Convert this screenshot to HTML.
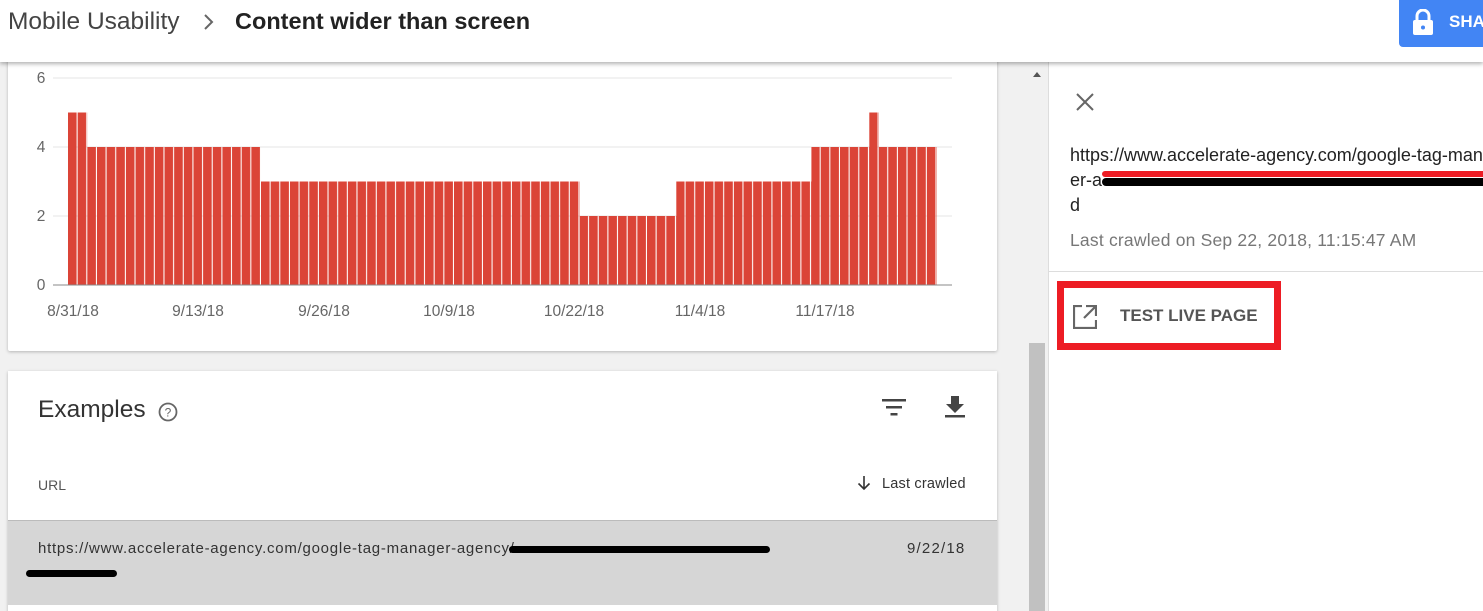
<!DOCTYPE html>
<html style="overflow:hidden;height:611px"><head><style>
body{margin:0;width:1483px;height:611px;overflow:hidden;background:#f1f1f1;font-family:"Liberation Sans",Arial,sans-serif;position:relative}
.a{position:absolute;white-space:nowrap}
</style></head><body>
<div class="a" style="left:0;top:62px;width:1048px;height:549px;background:#f1f1f1"></div>
<div class="a" style="left:8px;top:50px;width:989px;height:301px;background:#fff;box-shadow:0 1px 3px rgba(0,0,0,.25);border-radius:2px"></div>
<svg class="a" style="left:0;top:0" width="1000" height="330">
<defs><pattern id="p" patternUnits="userSpaceOnUse" x="68" y="0" width="9.65" height="400"><rect x="0" y="0" width="8.6" height="400" fill="#db4437"/></pattern></defs>
<g stroke="#e6e6e6"><line x1="53" y1="78" x2="952" y2="78"/><line x1="53" y1="147" x2="952" y2="147"/><line x1="53" y1="216" x2="952" y2="216"/></g>
<g fill="url(#p)">
<rect x="68" y="112.5" width="19.3" height="172.5"/>
<rect x="87.3" y="147" width="173.7" height="138"/>
<rect x="261" y="181.5" width="318.8" height="103.5"/>
<rect x="579.8" y="216" width="96.5" height="69"/>
<rect x="676.3" y="181.5" width="135.1" height="103.5"/>
<rect x="811.4" y="147" width="57.9" height="138"/>
<rect x="869.3" y="112.5" width="9.65" height="172.5"/>
<rect x="879" y="147" width="57.9" height="138"/>
</g>
<line x1="53" y1="285" x2="952" y2="285" stroke="#888"/>
<g font-size="15.5" fill="#666" text-anchor="middle" font-family="Liberation Sans,Arial,sans-serif">
<text x="41" y="83">6</text><text x="41" y="152">4</text><text x="41" y="221">2</text><text x="41" y="290">0</text>
<text x="73" y="316">8/31/18</text><text x="198" y="316">9/13/18</text><text x="324" y="316">9/26/18</text><text x="449" y="316">10/9/18</text><text x="574" y="316">10/22/18</text><text x="700" y="316">11/4/18</text><text x="825" y="316">11/17/18</text>
</g></svg>
<div class="a" style="left:8px;top:371px;width:989px;height:260px;background:#fff;box-shadow:0 1px 3px rgba(0,0,0,.25)"></div>
<div class="a" style="left:38px;top:396px;font-size:24.5px;color:#333">Examples</div>
<svg class="a" style="left:157px;top:401px" width="22" height="22"><circle cx="11" cy="11" r="8.5" fill="none" stroke="#666" stroke-width="1.8"/><text x="11" y="15.5" font-size="12" text-anchor="middle" fill="#666" font-family="Liberation Sans,Arial">?</text></svg>
<svg class="a" style="left:882px;top:398px" width="24" height="20"><g fill="#444"><rect x="0" y="1" width="24" height="2.5"/><rect x="4" y="8" width="16" height="2.5"/><rect x="8.5" y="15" width="7" height="2.5"/></g></svg>
<svg class="a" style="left:944px;top:396px" width="22" height="24"><path d="M7 0h8v8h5l-9 9-9-9h5z" fill="#444"/><rect x="1" y="19" width="20" height="2.5" fill="#444"/></svg>
<div class="a" style="left:38px;top:477px;font-size:14px;color:#555">URL</div>
<svg class="a" style="left:857px;top:475px" width="14" height="16"><path d="M7 1v13M1.5 8.5L7 14l5.5-5.5" fill="none" stroke="#333" stroke-width="1.6"/></svg>
<div class="a" style="left:882px;top:476px;font-size:14.5px;color:#333;letter-spacing:.2px">Last crawled</div>
<div class="a" style="left:8px;top:520px;width:989px;height:84px;background:#d6d6d6;border-top:1px solid #bbb"></div>
<div class="a" style="left:38px;top:540px;font-size:15px;color:#333;letter-spacing:.75px">https://www.accelerate-agency.com/google-tag-manager-agency/</div>
<div class="a" style="left:509px;top:546px;width:261px;height:7px;background:#000;border-radius:4px"></div>
<div class="a" style="left:26px;top:570px;width:91px;height:7px;background:#000;border-radius:4px"></div>
<div class="a" style="left:907px;top:540px;font-size:15px;color:#333;letter-spacing:1.2px">9/22/18</div>
<div class="a" style="left:1028px;top:62px;width:18px;height:549px;background:#f1f1f1"></div>
<div class="a" style="left:1029px;top:343px;width:16px;height:268px;background:#c1c1c1"></div>
<div class="a" style="left:1033px;top:72px;width:0;height:0;border:4px solid transparent;border-bottom:5px solid #555;border-top:0"></div>
<div class="a" style="left:1048px;top:62px;width:435px;height:549px;background:#fff;border-left:1px solid #ddd"></div>
<svg class="a" style="left:1075px;top:92px" width="20" height="20"><path d="M2 2L18 18M18 2L2 18" stroke="#666" stroke-width="2"/></svg>
<div class="a" style="left:1070px;top:143px;font-size:18px;color:#222;line-height:25px">https://www.accelerate-agency.com/google-tag-man<br>er-a<br>d</div>
<div class="a" style="left:1102px;top:171px;width:381px;height:6px;background:#ed1c24;border-radius:3px 0 0 3px"></div>
<div class="a" style="left:1102px;top:178px;width:381px;height:8px;background:#000;border-radius:4px 0 0 4px"></div>
<div class="a" style="left:1070px;top:230px;font-size:17.5px;color:#777;letter-spacing:.2px">Last crawled on Sep 22, 2018, 11:15:47 AM</div>
<div class="a" style="left:1049px;top:271px;width:434px;height:1px;background:#ddd"></div>
<div class="a" style="left:1057px;top:281px;width:210px;height:55px;border:7px solid #ed1c24"></div>
<svg class="a" style="left:1073px;top:305px" width="24" height="24"><path d="M9 1H1v22h22v-8" fill="none" stroke="#666" stroke-width="2.2"/><path d="M13 1h10v10M23 1L11 13" fill="none" stroke="#666" stroke-width="2.2"/></svg>
<div class="a" style="left:1120px;top:306px;font-size:17px;font-weight:bold;color:#555">TEST LIVE PAGE</div>
<div class="a" style="left:0;top:0;width:1483px;height:62px;background:#fff;box-shadow:0 2px 4px rgba(0,0,0,.3)"></div>
<div class="a" style="left:8px;top:8px;font-size:24.5px;color:#444">Mobile Usability</div>
<svg class="a" style="left:203px;top:14px" width="12" height="16"><path d="M2 1l7 7-7 7" fill="none" stroke="#666" stroke-width="2"/></svg>
<div class="a" style="left:235px;top:8px;font-size:23.5px;color:#222;font-weight:bold">Content wider than screen</div>
<div class="a" style="left:1399px;top:0;width:84px;height:47px;background:#4285f4;border-radius:0 0 0 4px"></div>
<svg class="a" style="left:1412px;top:9px" width="22" height="26"><path d="M5 11V7a6 6 0 0 1 12 0v4" fill="none" stroke="#fff" stroke-width="3"/><rect x="1" y="11" width="20" height="15" rx="2" fill="#fff"/><circle cx="11" cy="18.5" r="2" fill="#4285f4"/></svg>
<div class="a" style="left:1449px;top:12px;font-size:17px;font-weight:bold;color:#fff">SHARE</div>
</body></html>
